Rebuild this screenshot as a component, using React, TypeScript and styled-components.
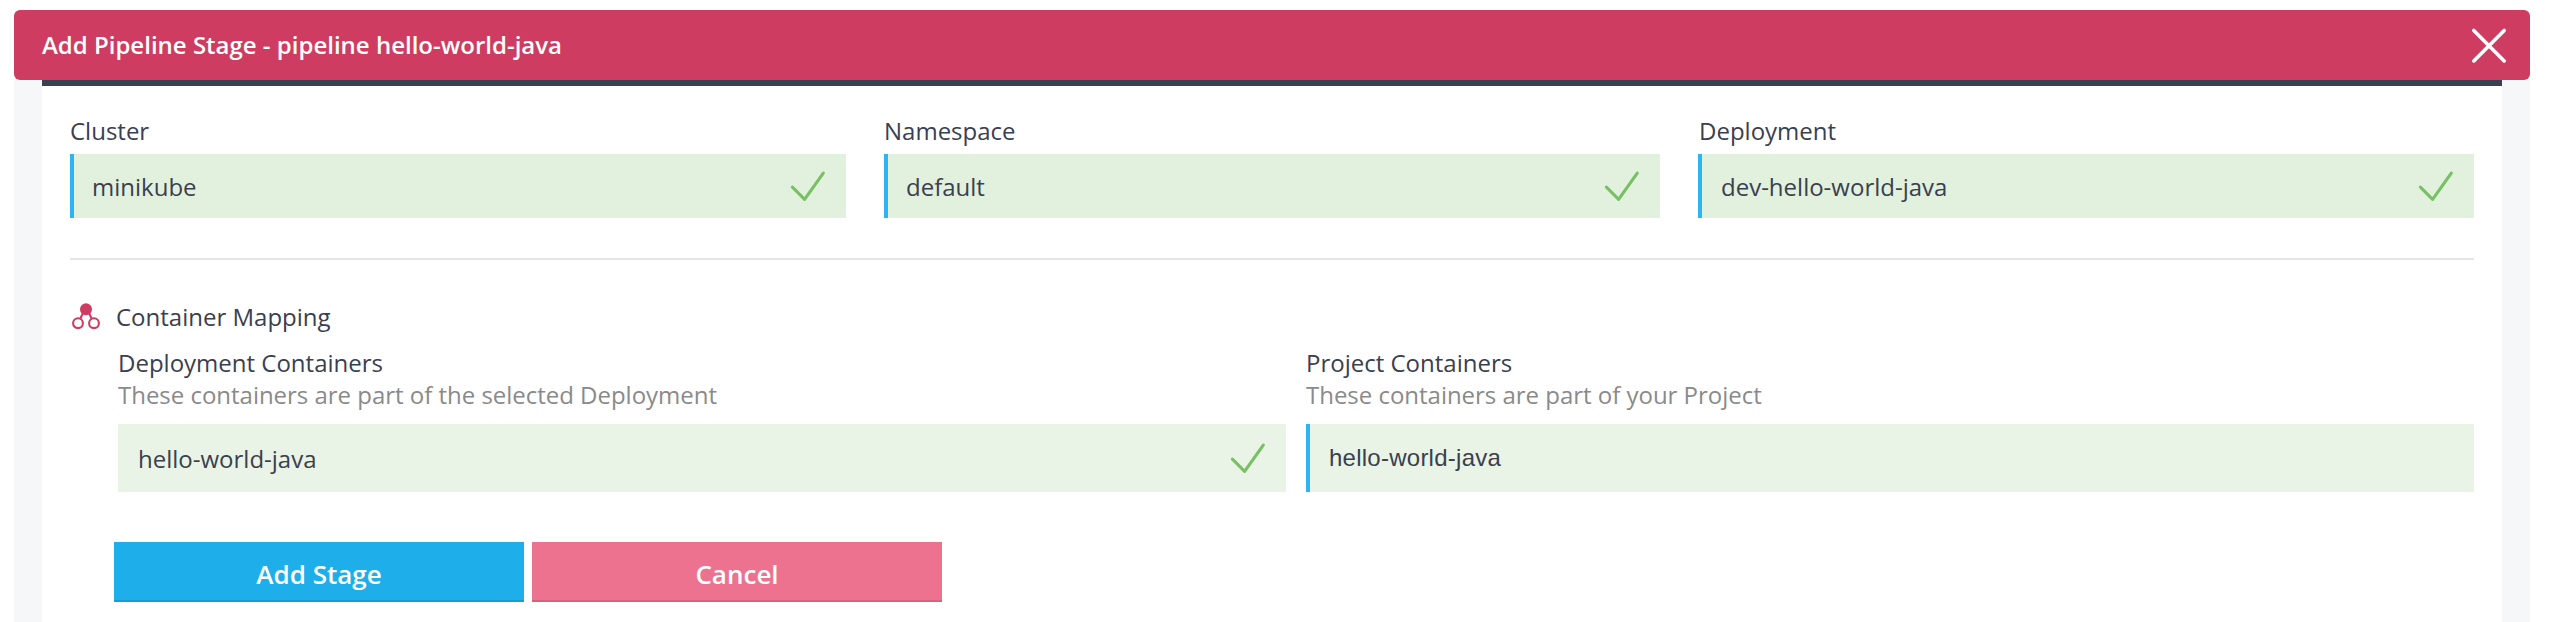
import React from "react";
import styled, { createGlobalStyle } from "styled-components";

const GlobalStyle = createGlobalStyle`
  *, *::before, *::after { box-sizing: border-box; }
  body {
    margin: 0;
    background: #ffffff;
    color: #3a404f;
    font: 400 24px/32px "Open Sans", "Noto Sans", sans-serif;
    overflow: hidden;
  }
`;

const Modal = styled.main`
  width: 2516px;
  height: 622px;
  margin-left: 14px;
  padding-top: 10px;
`;

const Header = styled.header`
  display: flex;
  align-items: center;
  justify-content: space-between;
  height: 70px;
  padding: 0 22px 0 28px;
  border-radius: 6px;
  background: #cf3c61;
`;

const Title = styled.h1`
  margin: 0;
  color: #ffffff;
  font-size: 24px;
  line-height: 32px;
  font-weight: 600;
`;

const CloseButton = styled.button`
  display: flex;
  padding: 0;
  border: 0;
  background: none;
  svg { display: block; }
`;

const Backdrop = styled.div`
  height: 542px;
  padding: 0 28px;
  background: #f5f7f9;
`;

const Panel = styled.section`
  height: 100%;
  padding: 29px 28px 0;
  border-top: 6px solid #3a404f;
  background: #ffffff;
`;

const Columns = styled.div<{ $count: number; $gap: number }>`
  display: grid;
  grid-template-columns: repeat(${(p) => p.$count}, 1fr);
  column-gap: ${(p) => p.$gap}px;
`;

const Label = styled.div<{ $inset?: number }>`
  height: 32px;
  padding-left: ${(p) => p.$inset ?? 0}px;
  white-space: nowrap;
`;

const Hint = styled(Label)`
  color: #8a8a8b;
  letter-spacing: -0.02px;
`;

const Field = styled.div<{ $soft?: boolean; $accent?: boolean }>`
  display: flex;
  align-items: center;
  justify-content: space-between;
  height: ${(p) => (p.$soft ? 68 : 64)}px;
  margin-top: ${(p) => (p.$soft ? 13 : 7)}px;
  padding: 0 20px 0 ${(p) => (p.$accent ? 18 : 20)}px;
  border-left: ${(p) => (p.$accent ? "4px solid #2db4f2" : "0")};
  background: ${(p) => (p.$soft ? "#e9f4e6" : "#e2f1de")};
`;

const Value = styled.span<{ $inset?: number }>`
  padding: 2px 0 0 ${(p) => p.$inset ?? 0}px;
`;

const PlainValue = styled.span`
  padding-left: 1px;
  font-family: "Liberation Sans", Arial, sans-serif;
  letter-spacing: 0.25px;
`;

const Divider = styled.hr`
  height: 2px;
  margin: 40px 0 41px;
  border: 0;
  background: #e6e6e6;
`;

const SectionTitle = styled.div`
  display: flex;
  height: 32px;
  gap: 15px;
  padding-left: 2px;
`;

const MappingBody = styled.div`
  padding: 14px 0 0 48px;
`;

const Actions = styled.div`
  display: flex;
  gap: 8px;
  margin: 50px 0 0 44px;
`;

const ActionButton = styled.button<{ $tone: "primary" | "cancel" }>`
  width: 410px;
  height: 60px;
  padding: 5px 0 0;
  border: 0;
  border-bottom: 2px solid ${(p) => (p.$tone === "primary" ? "#1c9bd0" : "#d1657e")};
  background: ${(p) => (p.$tone === "primary" ? "#1eaeea" : "#ed728f")};
  color: #ffffff;
  font: 600 26px/36px "Open Sans", "Noto Sans", sans-serif;
`;

const CloseIcon = () => (
  <svg width="38" height="38" viewBox="0 0 38 38" fill="none" stroke="#fff" strokeWidth="3.6" strokeLinecap="round">
    <path d="M3.8 4.4 34.2 34.9M34.2 4.4 3.8 34.9" />
  </svg>
);

const CheckIcon = () => (
  <svg width="36" height="32" viewBox="0 0 36 32" fill="none" stroke="#77c063" strokeWidth="3.1" strokeLinecap="round" strokeLinejoin="round">
    <path d="M2.4 17.1 14.6 29.3 33.3 3.1" />
  </svg>
);

const MappingIcon = () => (
  <svg width="29" height="29" viewBox="0 0 29 29" fill="none" stroke="#cf3c61" strokeWidth="2.1">
    <path d="M11.5 11 8.4 17.5M16.5 11 19.6 17.5" />
    <circle cx="14" cy="8.2" r="6" fill="#cf3c61" stroke="none" />
    <circle cx="6" cy="22.2" r="4.9" />
    <circle cx="22" cy="22.2" r="4.9" />
  </svg>
);

const targets = [
  { label: "Cluster", value: "minikube", inset: 0 },
  { label: "Namespace", value: "default", inset: 0 },
  { label: "Deployment", value: "dev-hello-world-java", inset: 1 },
];

export default function App() {
  return (
    <>
      <GlobalStyle />
      <Modal>
        <Header>
          <Title>Add Pipeline Stage - pipeline hello-world-java</Title>
          <CloseButton aria-label="Close"><CloseIcon /></CloseButton>
        </Header>
        <Backdrop>
          <Panel>
            <Columns $count={3} $gap={38}>
              {targets.map((t) => (
                <div key={t.label}>
                  <Label $inset={t.inset}>{t.label}</Label>
                  <Field $accent>
                    <Value $inset={t.inset}>{t.value}</Value>
                    <CheckIcon />
                  </Field>
                </div>
              ))}
            </Columns>
            <Divider />
            <SectionTitle>
              <MappingIcon />
              <span>Container Mapping</span>
            </SectionTitle>
            <MappingBody>
              <Columns $count={2} $gap={20}>
                <div>
                  <Label>Deployment Containers</Label>
                  <Hint>These containers are part of the selected Deployment</Hint>
                  <Field $soft>
                    <Value>hello-world-java</Value>
                    <CheckIcon />
                  </Field>
                </div>
                <div>
                  <Label>Project Containers</Label>
                  <Hint>These containers are part of your Project</Hint>
                  <Field $soft $accent>
                    <PlainValue>hello-world-java</PlainValue>
                  </Field>
                </div>
              </Columns>
            </MappingBody>
            <Actions>
              <ActionButton $tone="primary">Add Stage</ActionButton>
              <ActionButton $tone="cancel">Cancel</ActionButton>
            </Actions>
          </Panel>
        </Backdrop>
      </Modal>
    </>
  );
}
